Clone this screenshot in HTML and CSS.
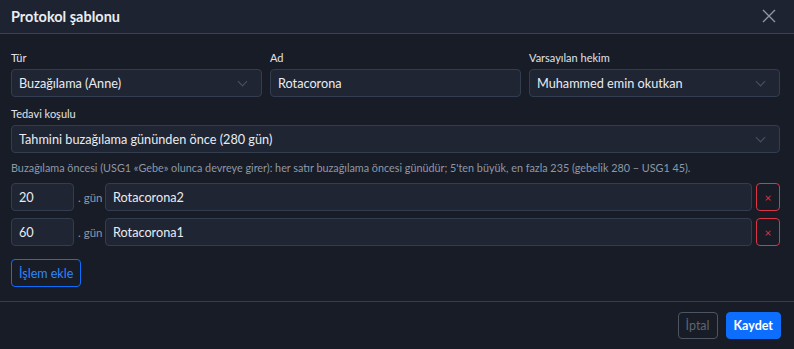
FILE: index.html
```html
<!DOCTYPE html>
<html lang="tr">
<head>
  <meta charset="UTF-8" />
  <title>Protokol şablonu</title>
  <link rel="stylesheet" href="styles.css">
</head>
<body>
  <div class="modal">
    <header class="modal-header">
      <span class="modal-title">Protokol şablonu</span>
      <button class="close-btn" aria-label="Kapat">
        <svg width="14" height="14" viewBox="0 0 14 14"><path d="M1 1L13 13M13 1L1 13" stroke="#8d96a3" stroke-width="1.4" fill="none"/></svg>
      </button>
    </header>

    <div class="modal-body">
      <div class="row-3">
        <div class="field">
          <label>Tür</label>
          <div class="select">Buzağılama (Anne)<span class="chev"></span></div>
        </div>
        <div class="field">
          <label>Ad</label>
          <div class="input">Rotacorona</div>
        </div>
        <div class="field">
          <label>Varsayılan hekim</label>
          <div class="select">Muhammed emin okutkan<span class="chev"></span></div>
        </div>
      </div>

      <div class="field">
        <label>Tedavi koşulu</label>
        <div class="select">Tahmini buzağılama gününden önce (280 gün)<span class="chev"></span></div>
      </div>

      <p class="hint">Buzağılama öncesi (USG1 «Gebe» olunca devreye girer): her satır buzağılama öncesi günüdür; 5'ten büyük, en fazla 235 (gebelik 280 − USG1 45).</p>

      <div class="step">
        <div class="input day">20</div>
        <span class="unit">. gün</span>
        <div class="input name">Rotacorona2</div>
        <button class="del-btn">×</button>
      </div>
      <div class="step">
        <div class="input day">60</div>
        <span class="unit">. gün</span>
        <div class="input name">Rotacorona1</div>
        <button class="del-btn">×</button>
      </div>

      <button class="add-btn">İşlem ekle</button>
    </div>

    <footer class="modal-footer">
      <button class="btn-cancel">İptal</button>
      <button class="btn-save">Kaydet</button>
    </footer>
  </div>
</body>
</html>
```

FILE: styles.css
```css
* { box-sizing: border-box; margin: 0; padding: 0; }

html, body {
  height: 100%;
  background-color: #171c26;
  font-family: Lato, 'Noto Sans', sans-serif;
  color: #e6e9ee;
}

.modal {
  width: 794px;
  height: 349px;
  display: flex;
  flex-direction: column;
}

.modal-header {
  display: flex;
  align-items: center;
  justify-content: space-between;
  height: 35px;
  padding: 0 11px;
  background-color: #1d2330;
  border-bottom: 1px solid #34445a;
}

.modal-title {
  font-size: 14.5px;
  font-weight: 700;
  color: #e9ecf1;
}

.close-btn {
  background: none;
  border: none;
  display: flex;
  padding: 0 7px 2px 0;
}

.modal-body {
  padding: 17px 14px 14px 11px;
  flex-grow: 1;
}

.row-3 {
  display: grid;
  grid-template-columns: repeat(3, 1fr);
  gap: 8px;
  margin-bottom: 10px;
}

.field label {
  display: block;
  font-size: 11px;
  color: #e0e4ea;
  line-height: 14px;
  margin-bottom: 4px;
}

.select, .input {
  height: 28px;
  display: flex;
  align-items: center;
  padding: 0 7px;
  background-color: #1f2533;
  border: 1px solid #323d50;
  border-radius: 4px;
  font-size: 12.7px;
  color: #e9ecf1;
  position: relative;
}

.chev {
  position: absolute;
  right: 15px;
  top: 8px;
  width: 7px;
  height: 7px;
  border-right: 1px solid #4b5464;
  border-bottom: 1px solid #4b5464;
  transform: rotate(45deg);
}

.hint {
  font-size: 10.8px;
  color: #8f98a6;
  margin: 7px 0 8px;
  line-height: 15px;
  white-space: nowrap;
}

.step {
  display: flex;
  align-items: center;
  margin-bottom: 7px;
}

.input.day {
  width: 63px;
  flex-shrink: 0;
}

.unit {
  font-size: 11.5px;
  color: #8f98a6;
  width: 31px;
  padding-left: 4px;
}

.input.name {
  flex-grow: 1;
}

.del-btn {
  width: 24px;
  height: 28px;
  margin-left: 4px;
  background: none;
  border: 1px solid #dc3545;
  border-radius: 4px;
  color: #dc3545;
  font-size: 12px;
  font-family: inherit;
}

.add-btn {
  margin-top: 6px;
  height: 28px;
  padding: 0 7px;
  background: none;
  border: 1px solid #0d6efd;
  border-radius: 4px;
  color: #2f86ff;
  font-size: 12.5px;
  font-family: inherit;
}

.modal-footer {
  display: flex;
  justify-content: flex-end;
  gap: 8px;
  padding: 10px 13px 10px 0;
  border-top: 1px solid #353c4a;
  height: 48px;
}

.btn-cancel, .btn-save {
  height: 27px;
  border-radius: 4px;
  font-size: 12.5px;
  font-family: inherit;
}

.btn-cancel {
  padding: 0 7px;
  background: none;
  border: 1px solid #4d5562;
  color: #5d6572;
}

.btn-save {
  padding: 0 7px;
  background-color: #0d6efd;
  border: 1px solid #0d6efd;
  color: #fff;
  font-weight: 700;
}
```
